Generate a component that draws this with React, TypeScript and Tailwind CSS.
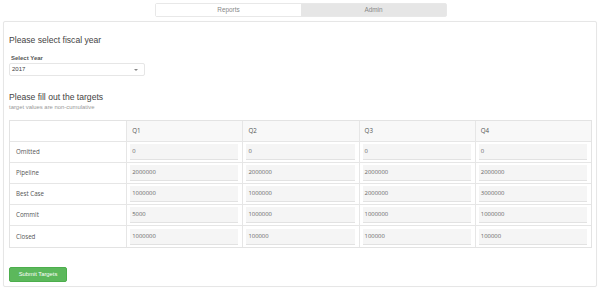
import React from "react";

interface TargetRow {
  label: string;
  values: string[];
}

const rows: TargetRow[] = [
  { label: "Omitted", values: ["0", "0", "0", "0"] },
  { label: "Pipeline", values: ["2000000", "2000000", "2000000", "2000000"] },
  { label: "Best Case", values: ["1000000", "1000000", "2000000", "3000000"] },
  { label: "Commit", values: ["5000", "1000000", "1000000", "1000000"] },
  { label: "Closed", values: ["1000000", "100000", "100000", "100000"] },
];

const quarters = ["Q1", "Q2", "Q3", "Q4"];

const App: React.FC = () => {
  return (
    <div className="w-[600px] h-[288px] bg-white overflow-hidden font-['Liberation_Sans',Arial,sans-serif]">
      {/* Tabs */}
      <div className="pt-[3px] flex justify-center">
        <div className="ml-[2px] w-[292px] h-[14px] flex border border-[#e8e8e8] rounded-[2px] text-[6.4px] text-[#888]">
          <div className="flex-1 flex items-center justify-center bg-white">Reports</div>
          <div className="flex-1 flex items-center justify-center bg-[#e6e6e6]">Admin</div>
        </div>
      </div>

      {/* Panel */}
      <div className="mx-[3px] mt-[4px] h-[266px] border border-[#e6e6e6] rounded-[2px] shadow-[0_0_1px_rgba(0,0,0,0.05)] px-[5px] pt-[12px]">
        <div className="h-[12px] leading-[12px] text-[8.6px] text-[#444] [font-variant-ligatures:none]">Please select fiscal year</div>

        <div className="mt-[8px] h-[8px] leading-[8px] text-[6px] font-bold text-[#555] pl-[2px]">Select Year</div>
        <div className="mt-[1px] w-[136px] h-[13px] border border-[#e6e6e6] rounded-[2px] flex items-center justify-between pl-[2px] pr-[6px] text-[6px] text-[#444]">
          <span>2017</span>
          <span className="w-0 h-0 border-l-[2px] border-r-[2px] border-t-[2.5px] border-l-transparent border-r-transparent border-t-[#888]" />
        </div>

        <div className="mt-[15px] h-[12px] leading-[12px] text-[8.6px] text-[#444] [font-variant-ligatures:none]">Please fill out the targets</div>
        <div className="h-[8px] leading-[8px] text-[5.9px] text-[#999]">target values are non-cumulative</div>

        {/* Targets table */}
        <div className="mt-[9px] w-[583px] border border-[#e3e3e3] text-[#555] font-['Open_Sans',sans-serif]">
          <div className="grid grid-cols-5 h-[21px] border-b border-[#e6e6e6] bg-[#f8f8f8] text-[6.2px]">
            <div className="bg-white" />
            {quarters.map((q) => (
              <div key={q} className="border-l border-[#e6e6e6] flex items-center pl-[5px]">
                {q}
              </div>
            ))}
          </div>
          {rows.map((row, i) => (
            <div
              key={row.label}
              className={`grid grid-cols-5 h-[21px] ${i < rows.length - 1 ? "border-b border-[#e6e6e6]" : ""}`}
            >
              <div className="flex items-center pl-[6px] text-[6.2px]">{row.label}</div>
              {row.values.map((v, j) => (
                <div key={j} className="border-l border-[#e6e6e6] flex items-center pl-[3px] pr-[4px]">
                  <div className="w-full h-[16px] bg-[#f5f5f5] border-b border-[#e2e2e2] flex items-center pl-[2px] text-[5.9px] text-[#666]">
                    {v}
                  </div>
                </div>
              ))}
            </div>
          ))}
        </div>

        <button className="mt-[19px] w-[58px] h-[15px] bg-[#5cb85c] rounded-[2px] border border-[#4cae4c] text-white text-[5.8px] flex items-center justify-center">
          Submit Targets
        </button>
      </div>
    </div>
  );
};

export default App;
